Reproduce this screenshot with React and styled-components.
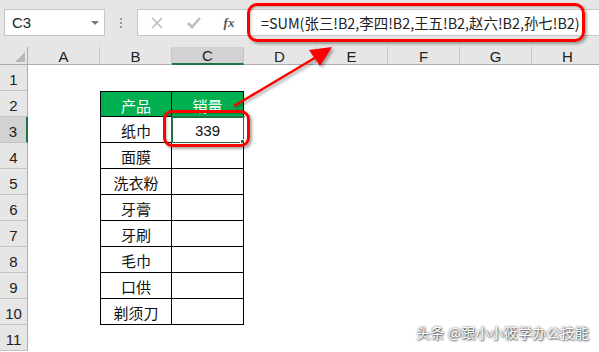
import React from "react";
import styled, { createGlobalStyle } from "styled-components";

const GlobalStyle = createGlobalStyle`
  html, body { margin: 0; padding: 0; background: #ffffff; }
  body { font-family: "Liberation Sans", "Noto Sans CJK SC", sans-serif; }
`;

const Screen = styled.div`
  position: relative;
  width: 599px;
  height: 352px;
  overflow: hidden;
  background: #ffffff;
  display: flex;
  flex-direction: column;
`;

const Toolbar = styled.div`
  height: 47px;
  box-sizing: border-box;
  background: #e6e6e6;
  display: flex;
  align-items: flex-start;
  padding: 9px 0 0 4px;
`;

const NameBox = styled.div`
  width: 101px;
  height: 27px;
  box-sizing: border-box;
  background: #ffffff;
  border: 1px solid #c6c6c6;
  display: flex;
  align-items: center;
  justify-content: space-between;
  padding: 0 5px 0 7px;
  font-size: 15px;
  color: #222;
`;

const DropArrow = styled.span`
  width: 0;
  height: 0;
  border-left: 4px solid transparent;
  border-right: 4px solid transparent;
  border-top: 4px solid #7a7a7a;
`;

const Grip = styled.div`
  width: 32px;
  height: 27px;
  display: flex;
  flex-direction: column;
  align-items: center;
  justify-content: center;
  gap: 2px;
  span {
    width: 2px;
    height: 2px;
    background: #9a9a9a;
  }
`;

const FormulaBox = styled.div`
  flex: 1;
  min-width: 0;
  height: 27px;
  box-sizing: border-box;
  background: #ffffff;
  border: 1px solid #c6c6c6;
  border-right: none;
  display: flex;
  align-items: center;
`;

const ToolIcon = styled.div`
  width: ${(p) => p.$w}px;
  flex-shrink: 0;
  display: flex;
  justify-content: center;
  align-items: center;
  color: ${(p) => p.$color || "#bdbdbd"};
`;

const Fx = styled.span`
  font-family: "Liberation Serif", serif;
  font-style: italic;
  font-weight: bold;
  font-size: 13px;
  color: #555;
`;

const FormulaText = styled.div`
  padding-left: 15px;
  font-family: "Noto Sans CJK SC", "Liberation Sans", sans-serif;
  font-size: 14.4px;
  color: #222;
  white-space: nowrap;
  line-height: 27px;
`;

const Sheet = styled.div`
  display: grid;
  grid-template-columns: 28px repeat(8, 72px);
  grid-template-rows: 18px repeat(11, 26px);
`;

const Corner = styled.div`
  background: #e6e6e6;
  border-right: 1px solid #ababab;
  border-bottom: 1px solid #ababab;
  position: relative;
  &::after {
    content: "";
    position: absolute;
    right: 2px;
    bottom: 2px;
    border-left: 10px solid transparent;
    border-bottom: 10px solid #b8b8b8;
  }
`;

const ColHead = styled.div`
  background: ${(p) => (p.$active ? "#d2d2d2" : "#e6e6e6")};
  border-right: 1px solid #c4c4c4;
  border-bottom: ${(p) => (p.$active ? "2px solid #217346" : "1px solid #ababab")};
  box-sizing: border-box;
  display: flex;
  align-items: center;
  justify-content: center;
  font-size: 15px;
  color: #222;
  padding-top: 1px;
`;

const RowHead = styled.div`
  background: ${(p) => (p.$active ? "#d2d2d2" : "#e6e6e6")};
  border-right: ${(p) => (p.$active ? "2px solid #217346" : "1px solid #ababab")};
  border-bottom: 1px solid #c4c4c4;
  box-sizing: border-box;
  display: flex;
  align-items: flex-end;
  justify-content: center;
  padding-bottom: 2px;
  font-size: 15px;
  color: #222;
`;

const Cell = styled.div`
  position: relative;
  box-sizing: border-box;
  display: flex;
  align-items: center;
  justify-content: center;
  padding-top: 2px;
  font-family: "Noto Sans CJK SC", "Liberation Sans", sans-serif;
  font-size: 15px;
  color: ${(p) => (p.$head ? "#ffffff" : "#111")};
  background: ${(p) => (p.$head ? "#00b050" : "#ffffff")};
  border-right: ${(p) => (p.$boxed ? "1px solid #000" : "none")};
  border-bottom: ${(p) => (p.$boxed ? "1px solid #000" : "none")};
  border-left: ${(p) => (p.$left ? "1px solid #000" : "none")};
  border-top: ${(p) => (p.$top ? "1px solid #000" : "none")};
`;

const Number = styled.span`
  font-family: "Liberation Sans", sans-serif;
  font-size: 15px;
`;

const Selection = styled.div`
  position: absolute;
  left: -1px;
  top: -1px;
  right: -2px;
  bottom: -2px;
  border: 2px solid #217346;
  pointer-events: none;
  &::after {
    content: "";
    position: absolute;
    right: -4px;
    bottom: -4px;
    width: 5px;
    height: 5px;
    background: #217346;
    border: 1px solid #ffffff;
  }
`;

const Callout = styled.div`
  position: absolute;
  left: ${(p) => p.$x}px;
  top: ${(p) => p.$y}px;
  width: ${(p) => p.$w}px;
  height: ${(p) => p.$h}px;
  box-sizing: border-box;
  border: 3px solid #ff0000;
  border-radius: ${(p) => p.$r}px;
  box-shadow: 2px 2px 3px rgba(0, 0, 0, 0.35), inset 1px 1px 2px rgba(0, 0, 0, 0.25);
  pointer-events: none;
`;

const Arrow = styled.svg`
  position: absolute;
  left: 0;
  top: 0;
  pointer-events: none;
  filter: drop-shadow(2px 2px 1.5px rgba(0, 0, 0, 0.35));
`;

const Watermark = styled.div`
  position: absolute;
  right: 10px;
  bottom: 10px;
  font-family: "Noto Sans CJK SC", sans-serif;
  font-size: 14px;
  color: #ffffff;
  letter-spacing: 0.2px;
  text-shadow: 0 0 2px rgba(0, 0, 0, 0.7), 1px 1px 2px rgba(0, 0, 0, 0.6);
`;

const columns = ["A", "B", "C", "D", "E", "F", "G", "H"];
const products = ["纸巾", "面膜", "洗衣粉", "牙膏", "牙刷", "毛巾", "口供", "剃须刀"];

function cellContent(row, col) {
  if (row === 2 && col === 1) return { text: "产品", head: true };
  if (row === 2 && col === 2) return { text: "销量", head: true };
  if (row >= 3 && row <= 10 && col === 1) return { text: products[row - 3] };
  if (row === 3 && col === 2) return { text: "339", num: true, selected: true };
  return { text: "" };
}

export default function App() {
  const rows = Array.from({ length: 11 }, (_, i) => i + 1);
  return (
    <Screen>
      <GlobalStyle />
      <Toolbar>
        <NameBox>
          C3
          <DropArrow />
        </NameBox>
        <Grip>
          <span />
          <span />
          <span />
        </Grip>
        <FormulaBox>
          <ToolIcon $w={38}>
            <svg width="12" height="12" viewBox="0 0 12 12">
              <path d="M1 1 L11 11 M11 1 L1 11" stroke="currentColor" strokeWidth="1.6" />
            </svg>
          </ToolIcon>
          <ToolIcon $w={36}>
            <svg width="14" height="12" viewBox="0 0 14 12">
              <path d="M1 6 L5 10 L13 1" stroke="currentColor" strokeWidth="2.6" fill="none" />
            </svg>
          </ToolIcon>
          <ToolIcon $w={34}>
            <Fx>fx</Fx>
          </ToolIcon>
          <FormulaText>=SUM(张三!B2,李四!B2,王五!B2,赵六!B2,孙七!B2)</FormulaText>
        </FormulaBox>
      </Toolbar>
      <Sheet>
        <Corner />
        {columns.map((c) => (
          <ColHead key={c} $active={c === "C"}>
            {c}
          </ColHead>
        ))}
        {rows.map((r) => (
          <React.Fragment key={r}>
            <RowHead $active={r === 3}>{r}</RowHead>
            {columns.map((c, ci) => {
              const info = cellContent(r, ci);
              const boxed = r >= 2 && r <= 10 && (ci === 1 || ci === 2);
              return (
                <Cell
                  key={c}
                  $boxed={boxed}
                  $left={boxed && ci === 1}
                  $top={boxed && r === 2}
                  $head={info.head}
                >
                  {info.num ? <Number>{info.text}</Number> : info.text}
                  {info.selected && <Selection />}
                </Cell>
              );
            })}
          </React.Fragment>
        ))}
      </Sheet>

      <Callout $x={247} $y={3} $w={338} $h={39} $r={10} />
      <Callout $x={163} $y={110} $w={87} $h={37} $r={9} />
      <Arrow width="599" height="352">
        <line x1="234" y1="106" x2="318" y2="56" stroke="#ff0000" strokeWidth="2.5" />
        <polygon points="332,47 309,50 320,66" fill="#ff0000" />
      </Arrow>
      <Watermark>头条 @跟小小筱学办公技能</Watermark>
    </Screen>
  );
}
